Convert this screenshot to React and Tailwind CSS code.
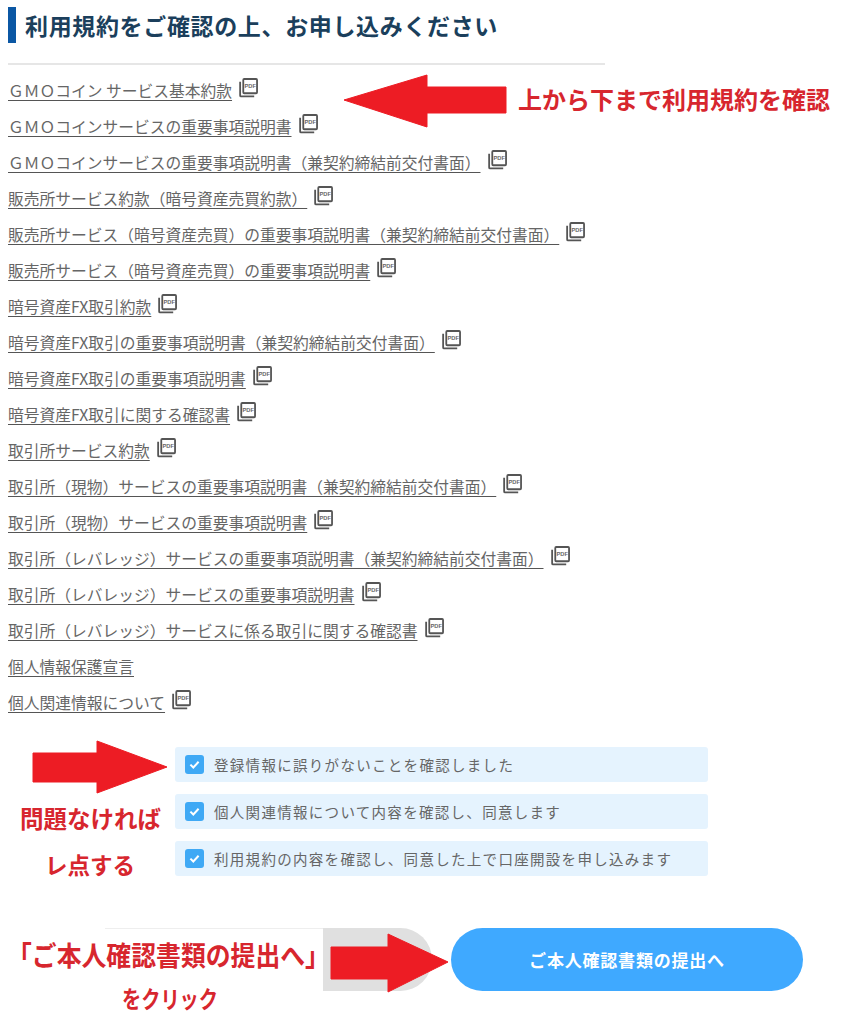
const links = [
  { label: "ＧＭＯコイン サービス基本約款", pdf: true },
  { label: "ＧＭＯコインサービスの重要事項説明書", pdf: true },
  { label: "ＧＭＯコインサービスの重要事項説明書（兼契約締結前交付書面）", pdf: true },
  { label: "販売所サービス約款（暗号資産売買約款）", pdf: true },
  { label: "販売所サービス（暗号資産売買）の重要事項説明書（兼契約締結前交付書面）", pdf: true },
  { label: "販売所サービス（暗号資産売買）の重要事項説明書", pdf: true },
  { label: "暗号資産FX取引約款", pdf: true },
  { label: "暗号資産FX取引の重要事項説明書（兼契約締結前交付書面）", pdf: true },
  { label: "暗号資産FX取引の重要事項説明書", pdf: true },
  { label: "暗号資産FX取引に関する確認書", pdf: true },
  { label: "取引所サービス約款", pdf: true },
  { label: "取引所（現物）サービスの重要事項説明書（兼契約締結前交付書面）", pdf: true },
  { label: "取引所（現物）サービスの重要事項説明書", pdf: true },
  { label: "取引所（レバレッジ）サービスの重要事項説明書（兼契約締結前交付書面）", pdf: true },
  { label: "取引所（レバレッジ）サービスの重要事項説明書", pdf: true },
  { label: "取引所（レバレッジ）サービスに係る取引に関する確認書", pdf: true },
  { label: "個人情報保護宣言", pdf: false },
  { label: "個人関連情報について", pdf: true },
];

const checks = [
  "登録情報に誤りがないことを確認しました",
  "個人関連情報について内容を確認し、同意します",
  "利用規約の内容を確認し、同意した上で口座開設を申し込みます",
];

function PdfIcon() {
  return (
    <svg width="19" height="20" viewBox="0 0 20 21" className="ml-[7px] mb-[6px] shrink-0">
      <path d="M1.2 4v14.3a1 1 0 0 0 1 1H16" fill="none" stroke="#555" strokeWidth="1.9" />
      <rect x="4.5" y="1" width="14.5" height="15" rx="1" fill="#fff" stroke="#555" strokeWidth="1.9" />
      <text x="11.8" y="10.8" textAnchor="middle" fontSize="6" fontWeight="700" fill="#666" fontFamily="Liberation Sans, sans-serif">PDF</text>
    </svg>
  );
}

function Check() {
  return (
    <span className="w-[19px] h-[19px] rounded-[3px] bg-[#3fa9f5] flex items-center justify-center shrink-0">
      <svg width="13" height="13" viewBox="0 0 13 13">
        <path d="M2.4 6.6l2.9 2.9 5.3-5.7" fill="none" stroke="#fff" strokeWidth="2" />
      </svg>
    </span>
  );
}

export default function App() {
  return (
    <div className="relative w-[850px] h-[1024px] overflow-hidden bg-white font-['Noto_Sans_CJK_JP','Noto_Sans',sans-serif]">
      {/* heading */}
      <div className="pt-[7px] pl-2">
        <h2 className="h-9 border-l-[8px] border-[#0b57a4] pl-[9px] flex items-center text-[23px] leading-9 font-bold tracking-[0.65px] text-[#1b3f5c]">
          利用規約をご確認の上、お申し込みください
        </h2>
        <div className="mt-5 w-[597px] h-[2px] bg-[#e6e6e6]"></div>
      </div>

      {/* document links */}
      <ul className="mt-[8px] pl-2">
        {links.map((l) => (
          <li key={l.label} className="h-9 flex items-center">
            <a className="text-[15.75px] leading-5 text-[#666] underline underline-offset-[3px] decoration-[#555]">
              {l.label}
            </a>
            {l.pdf && <PdfIcon />}
          </li>
        ))}
      </ul>

      {/* agreements */}
      <div className="mt-[26px] ml-[175px] w-[533px] flex flex-col gap-3">
        {checks.map((c) => (
          <label key={c} className="h-[35px] rounded-[3px] bg-[#e5f3fe] pl-[10px] flex items-center gap-[10px] text-[14.5px] tracking-[1.3px] text-[#666]">
            <Check />
            {c}
          </label>
        ))}
      </div>

      <div className="mt-[52px] ml-[451px]">
        <button className="w-[352px] h-[63px] rounded-full bg-[#3fa9ff] text-white text-[17px] font-bold tracking-[0.8px]">
          ご本人確認書類の提出へ
        </button>
      </div>

      {/* annotations pasted over the page */}
      <div className="absolute left-[105px] top-[928px] w-[220px] h-px bg-[#eeeeee]"></div>
      <div className="absolute left-[323px] top-[928px] w-[109px] h-[63px] rounded-r-full bg-[#e0e0e0]"></div>
      <svg width="850" height="1024" viewBox="0 0 850 1024" className="absolute inset-0 pointer-events-none">
        <path d="M344 100 427 75V87H506V113H427V127Z" fill="#ed1c24" stroke="#ed1c24" strokeLinejoin="round" />
        <path d="M33 753H97V741L167 767 97 793V782H33Z" fill="#ed1c24" stroke="#ed1c24" strokeLinejoin="round" />
        <path d="M331 947H388V934L448 962 388 992V979H331Z" fill="#ed1c24" stroke="#ed1c24" strokeLinejoin="round" />
      </svg>
      <p className="absolute left-[518px] top-[81px] text-2xl leading-9 font-bold text-[#d7262e]">上から下まで利用規約を確認</p>
      <p className="absolute left-5 top-[800px] text-[23.5px] leading-9 font-bold text-[#d7262e]">問題なければ</p>
      <p className="absolute left-[45px] top-[846px] text-[22.5px] leading-9 font-bold text-[#d7262e]">レ点する</p>
      <p className="absolute left-[7px] top-[937px] origin-left scale-x-[0.92] whitespace-nowrap text-[27px] leading-9 font-bold text-[#d7262e]">「ご本人確認書類の提出へ」</p>
      <p className="absolute left-[122px] top-[980px] origin-left scale-x-[0.8] whitespace-nowrap text-[24px] leading-9 font-bold text-[#d7262e]">をクリック</p>
    </div>
  );
}
